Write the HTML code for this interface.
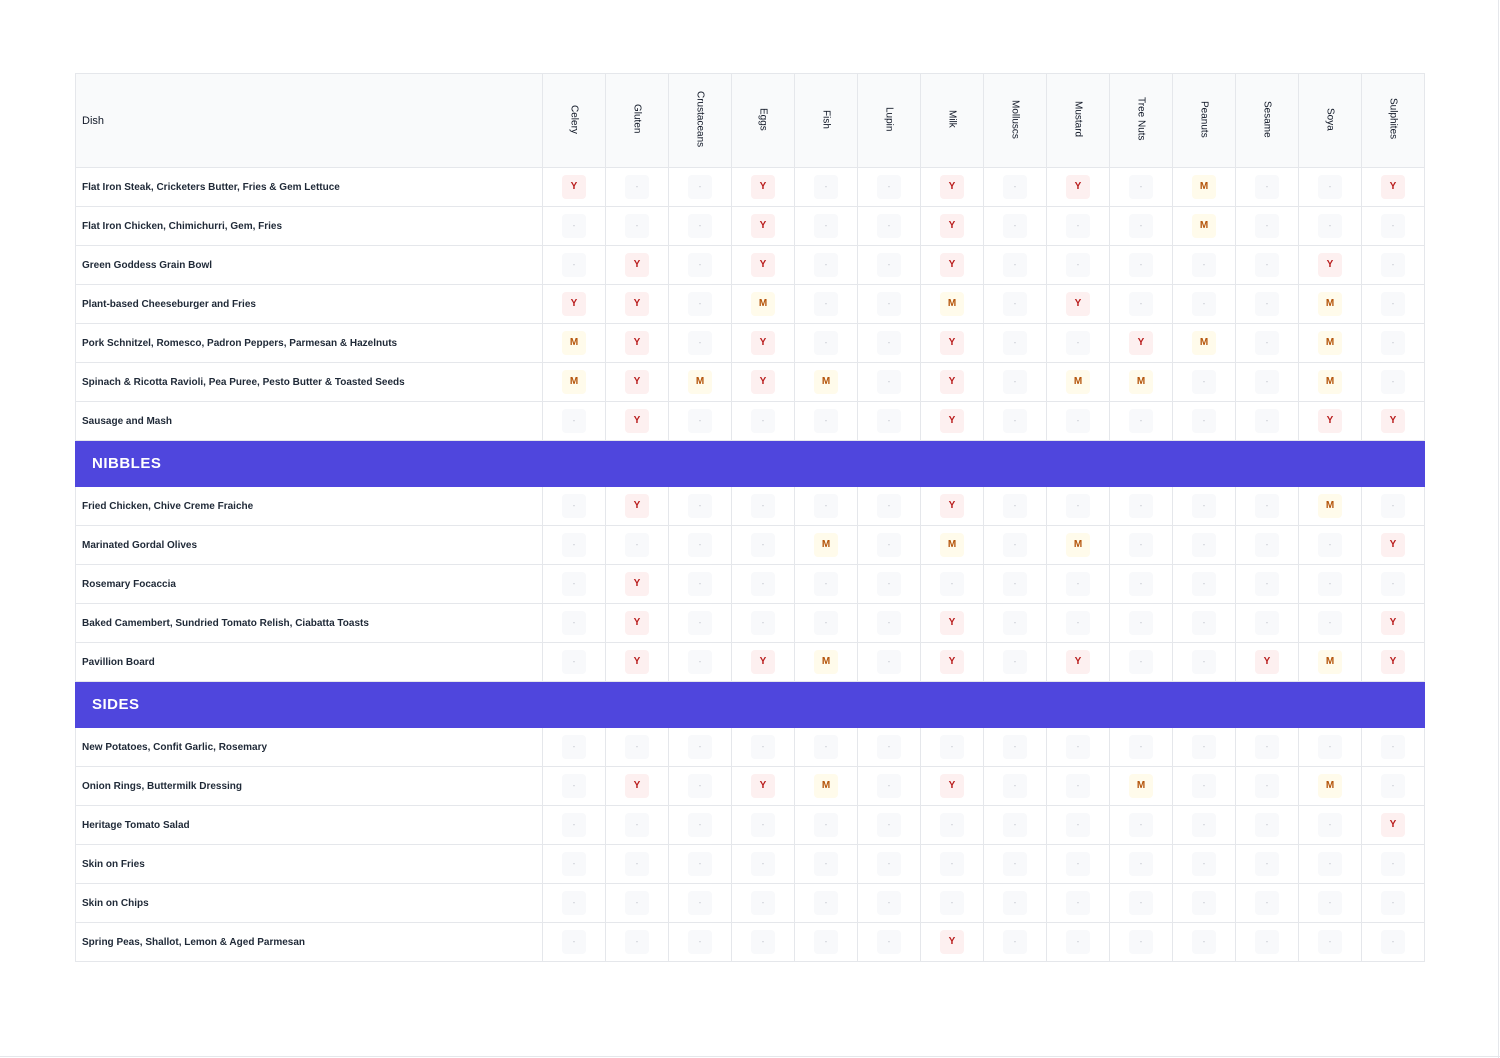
<!DOCTYPE html>
<html><head><meta charset="utf-8"><style>
html,body{margin:0;padding:0;background:#fff;width:1500px;height:1058px;overflow:hidden;font-family:"Liberation Sans",sans-serif;}
.edge{position:absolute;right:1px;top:0;width:1px;height:1058px;background:#e5e7eb}
.bedge{position:absolute;left:0;bottom:1px;width:1500px;height:1px;background:#e5e7eb}
table{position:absolute;left:75px;top:73px;border-collapse:collapse;width:1350px;table-layout:fixed}
td,th{border:1px solid #e5e7eb;padding:0;text-align:center;vertical-align:middle}
th{background:#f9fafb;height:93px;font-weight:400;color:#111827;font-size:10px}
th.d{text-align:left;padding-left:6px;width:460px;font-size:11px}
th span{writing-mode:vertical-rl;display:inline-block}
td{height:38px}
td.n{text-align:left;padding-left:6px;font-size:10px;font-weight:600;color:#1f2937;white-space:nowrap}
b,i,u{display:inline-block;width:24px;height:24px;line-height:24px;border-radius:4px;font-size:10px;font-style:normal;text-decoration:none;vertical-align:middle}
b{background:#fdf0f0;color:#b91c1c;font-weight:700}
i{background:#fffbeb;color:#b45309;font-weight:700}
u{background:#f8f9fb;color:#c0c4cc;font-size:8px}
tr.s td{background:#4f46dd;height:45px;color:#fff;text-align:left;padding-left:16px;font-weight:700;font-size:15px;letter-spacing:.5px;border-color:#4f46dd}
</style></head><body>
<div class="edge"></div><div class="bedge"></div>
<table>
<tr><th class="d">Dish</th><th><span>Celery</span></th><th><span>Gluten</span></th><th><span>Crustaceans</span></th><th><span>Eggs</span></th><th><span>Fish</span></th><th><span>Lupin</span></th><th><span>Milk</span></th><th><span>Molluscs</span></th><th><span>Mustard</span></th><th><span>Tree Nuts</span></th><th><span>Peanuts</span></th><th><span>Sesame</span></th><th><span>Soya</span></th><th><span>Sulphites</span></th></tr>
<tr><td class="n">Flat Iron Steak, Cricketers Butter, Fries &amp; Gem Lettuce</td><td><b>Y</b></td><td><u>-</u></td><td><u>-</u></td><td><b>Y</b></td><td><u>-</u></td><td><u>-</u></td><td><b>Y</b></td><td><u>-</u></td><td><b>Y</b></td><td><u>-</u></td><td><i>M</i></td><td><u>-</u></td><td><u>-</u></td><td><b>Y</b></td></tr>
<tr><td class="n">Flat Iron Chicken, Chimichurri, Gem, Fries</td><td><u>-</u></td><td><u>-</u></td><td><u>-</u></td><td><b>Y</b></td><td><u>-</u></td><td><u>-</u></td><td><b>Y</b></td><td><u>-</u></td><td><u>-</u></td><td><u>-</u></td><td><i>M</i></td><td><u>-</u></td><td><u>-</u></td><td><u>-</u></td></tr>
<tr><td class="n">Green Goddess Grain Bowl</td><td><u>-</u></td><td><b>Y</b></td><td><u>-</u></td><td><b>Y</b></td><td><u>-</u></td><td><u>-</u></td><td><b>Y</b></td><td><u>-</u></td><td><u>-</u></td><td><u>-</u></td><td><u>-</u></td><td><u>-</u></td><td><b>Y</b></td><td><u>-</u></td></tr>
<tr><td class="n">Plant-based Cheeseburger and Fries</td><td><b>Y</b></td><td><b>Y</b></td><td><u>-</u></td><td><i>M</i></td><td><u>-</u></td><td><u>-</u></td><td><i>M</i></td><td><u>-</u></td><td><b>Y</b></td><td><u>-</u></td><td><u>-</u></td><td><u>-</u></td><td><i>M</i></td><td><u>-</u></td></tr>
<tr><td class="n">Pork Schnitzel, Romesco, Padron Peppers, Parmesan &amp; Hazelnuts</td><td><i>M</i></td><td><b>Y</b></td><td><u>-</u></td><td><b>Y</b></td><td><u>-</u></td><td><u>-</u></td><td><b>Y</b></td><td><u>-</u></td><td><u>-</u></td><td><b>Y</b></td><td><i>M</i></td><td><u>-</u></td><td><i>M</i></td><td><u>-</u></td></tr>
<tr><td class="n">Spinach &amp; Ricotta Ravioli, Pea Puree, Pesto Butter &amp; Toasted Seeds</td><td><i>M</i></td><td><b>Y</b></td><td><i>M</i></td><td><b>Y</b></td><td><i>M</i></td><td><u>-</u></td><td><b>Y</b></td><td><u>-</u></td><td><i>M</i></td><td><i>M</i></td><td><u>-</u></td><td><u>-</u></td><td><i>M</i></td><td><u>-</u></td></tr>
<tr><td class="n">Sausage and Mash</td><td><u>-</u></td><td><b>Y</b></td><td><u>-</u></td><td><u>-</u></td><td><u>-</u></td><td><u>-</u></td><td><b>Y</b></td><td><u>-</u></td><td><u>-</u></td><td><u>-</u></td><td><u>-</u></td><td><u>-</u></td><td><b>Y</b></td><td><b>Y</b></td></tr>
<tr class="s"><td colspan="15">NIBBLES</td></tr>
<tr><td class="n">Fried Chicken, Chive Creme Fraiche</td><td><u>-</u></td><td><b>Y</b></td><td><u>-</u></td><td><u>-</u></td><td><u>-</u></td><td><u>-</u></td><td><b>Y</b></td><td><u>-</u></td><td><u>-</u></td><td><u>-</u></td><td><u>-</u></td><td><u>-</u></td><td><i>M</i></td><td><u>-</u></td></tr>
<tr><td class="n">Marinated Gordal Olives</td><td><u>-</u></td><td><u>-</u></td><td><u>-</u></td><td><u>-</u></td><td><i>M</i></td><td><u>-</u></td><td><i>M</i></td><td><u>-</u></td><td><i>M</i></td><td><u>-</u></td><td><u>-</u></td><td><u>-</u></td><td><u>-</u></td><td><b>Y</b></td></tr>
<tr><td class="n">Rosemary Focaccia</td><td><u>-</u></td><td><b>Y</b></td><td><u>-</u></td><td><u>-</u></td><td><u>-</u></td><td><u>-</u></td><td><u>-</u></td><td><u>-</u></td><td><u>-</u></td><td><u>-</u></td><td><u>-</u></td><td><u>-</u></td><td><u>-</u></td><td><u>-</u></td></tr>
<tr><td class="n">Baked Camembert, Sundried Tomato Relish, Ciabatta Toasts</td><td><u>-</u></td><td><b>Y</b></td><td><u>-</u></td><td><u>-</u></td><td><u>-</u></td><td><u>-</u></td><td><b>Y</b></td><td><u>-</u></td><td><u>-</u></td><td><u>-</u></td><td><u>-</u></td><td><u>-</u></td><td><u>-</u></td><td><b>Y</b></td></tr>
<tr><td class="n">Pavillion Board</td><td><u>-</u></td><td><b>Y</b></td><td><u>-</u></td><td><b>Y</b></td><td><i>M</i></td><td><u>-</u></td><td><b>Y</b></td><td><u>-</u></td><td><b>Y</b></td><td><u>-</u></td><td><u>-</u></td><td><b>Y</b></td><td><i>M</i></td><td><b>Y</b></td></tr>
<tr class="s"><td colspan="15">SIDES</td></tr>
<tr><td class="n">New Potatoes, Confit Garlic, Rosemary</td><td><u>-</u></td><td><u>-</u></td><td><u>-</u></td><td><u>-</u></td><td><u>-</u></td><td><u>-</u></td><td><u>-</u></td><td><u>-</u></td><td><u>-</u></td><td><u>-</u></td><td><u>-</u></td><td><u>-</u></td><td><u>-</u></td><td><u>-</u></td></tr>
<tr><td class="n">Onion Rings, Buttermilk Dressing</td><td><u>-</u></td><td><b>Y</b></td><td><u>-</u></td><td><b>Y</b></td><td><i>M</i></td><td><u>-</u></td><td><b>Y</b></td><td><u>-</u></td><td><u>-</u></td><td><i>M</i></td><td><u>-</u></td><td><u>-</u></td><td><i>M</i></td><td><u>-</u></td></tr>
<tr><td class="n">Heritage Tomato Salad</td><td><u>-</u></td><td><u>-</u></td><td><u>-</u></td><td><u>-</u></td><td><u>-</u></td><td><u>-</u></td><td><u>-</u></td><td><u>-</u></td><td><u>-</u></td><td><u>-</u></td><td><u>-</u></td><td><u>-</u></td><td><u>-</u></td><td><b>Y</b></td></tr>
<tr><td class="n">Skin on Fries</td><td><u>-</u></td><td><u>-</u></td><td><u>-</u></td><td><u>-</u></td><td><u>-</u></td><td><u>-</u></td><td><u>-</u></td><td><u>-</u></td><td><u>-</u></td><td><u>-</u></td><td><u>-</u></td><td><u>-</u></td><td><u>-</u></td><td><u>-</u></td></tr>
<tr><td class="n">Skin on Chips</td><td><u>-</u></td><td><u>-</u></td><td><u>-</u></td><td><u>-</u></td><td><u>-</u></td><td><u>-</u></td><td><u>-</u></td><td><u>-</u></td><td><u>-</u></td><td><u>-</u></td><td><u>-</u></td><td><u>-</u></td><td><u>-</u></td><td><u>-</u></td></tr>
<tr><td class="n">Spring Peas, Shallot, Lemon &amp; Aged Parmesan</td><td><u>-</u></td><td><u>-</u></td><td><u>-</u></td><td><u>-</u></td><td><u>-</u></td><td><u>-</u></td><td><b>Y</b></td><td><u>-</u></td><td><u>-</u></td><td><u>-</u></td><td><u>-</u></td><td><u>-</u></td><td><u>-</u></td><td><u>-</u></td></tr>
</table>
</body></html>
